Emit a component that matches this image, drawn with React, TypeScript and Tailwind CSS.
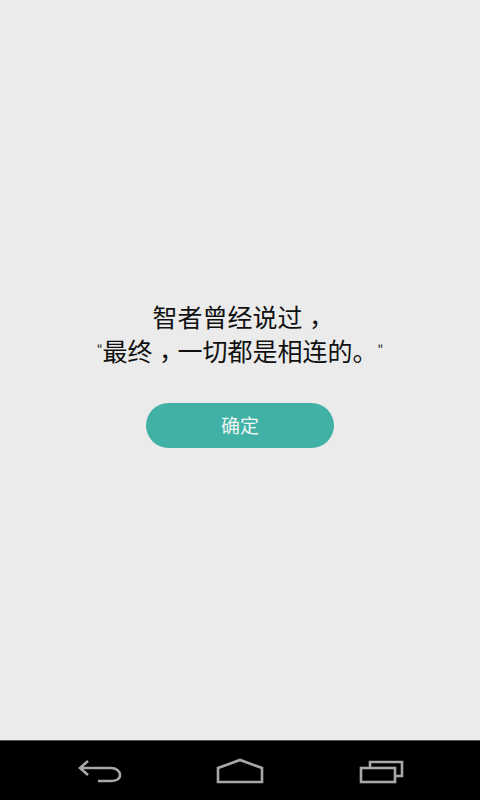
import React from 'react';

const BackIcon = () => (
  <svg width="44" height="26" viewBox="0 0 44 26" fill="none" stroke="#a8a8a8" strokeWidth="2.6">
    <path d="M10 3 L2 10 L10 17" />
    <path d="M2 10 H33 C38 10 42 13 42 17 C42 21 38 23 33 23 H20" />
  </svg>
);

const HomeIcon = () => (
  <svg width="48" height="26" viewBox="0 0 48 26" fill="none" stroke="#a8a8a8" strokeWidth="2.6">
    <path d="M2 10 L24 2 L46 10 V24 H2 Z" />
  </svg>
);

const RecentsIcon = () => (
  <svg width="47" height="26" viewBox="-1 0 47 26" fill="none" stroke="#a8a8a8" strokeWidth="2.6">
    <rect x="2" y="10" width="34" height="14" />
    <path d="M11 10 V4 H43 V18 H36" />
  </svg>
);

// centered full-width comma, sits a bit low in the original
const Comma = () => (
  <span className="inline-block translate-y-[7px] font-['Noto_Sans_CJK_TC',sans-serif] leading-[14px]">，</span>
);

const Quote = () => <span className="align-[7px] text-[12px] leading-none">"</span>;

const App: React.FC = () => {
  return (
    <div className="flex h-screen w-full flex-col bg-[#ebebeb] font-['Noto_Sans_CJK_SC',sans-serif]">
      <div className="flex flex-1 flex-col items-center pt-[299px]">
        <p className="text-center text-[25px] leading-[34px] text-[#111]">
          智者曾经说过<Comma />
          <br />
          <Quote />最终<Comma />一切都是相连的。<Quote />
        </p>
        <button className="mt-[36px] h-[45px] w-[188px] rounded-full bg-[#42b1a5] text-[19px] text-[#eef7f5]">
          确定
        </button>
      </div>
      <div className="flex h-[60px] items-center justify-between border-t border-[#555] bg-black pl-[78px] pr-[75px]">
        <BackIcon />
        <HomeIcon />
        <RecentsIcon />
      </div>
    </div>
  );
};

export default App;
